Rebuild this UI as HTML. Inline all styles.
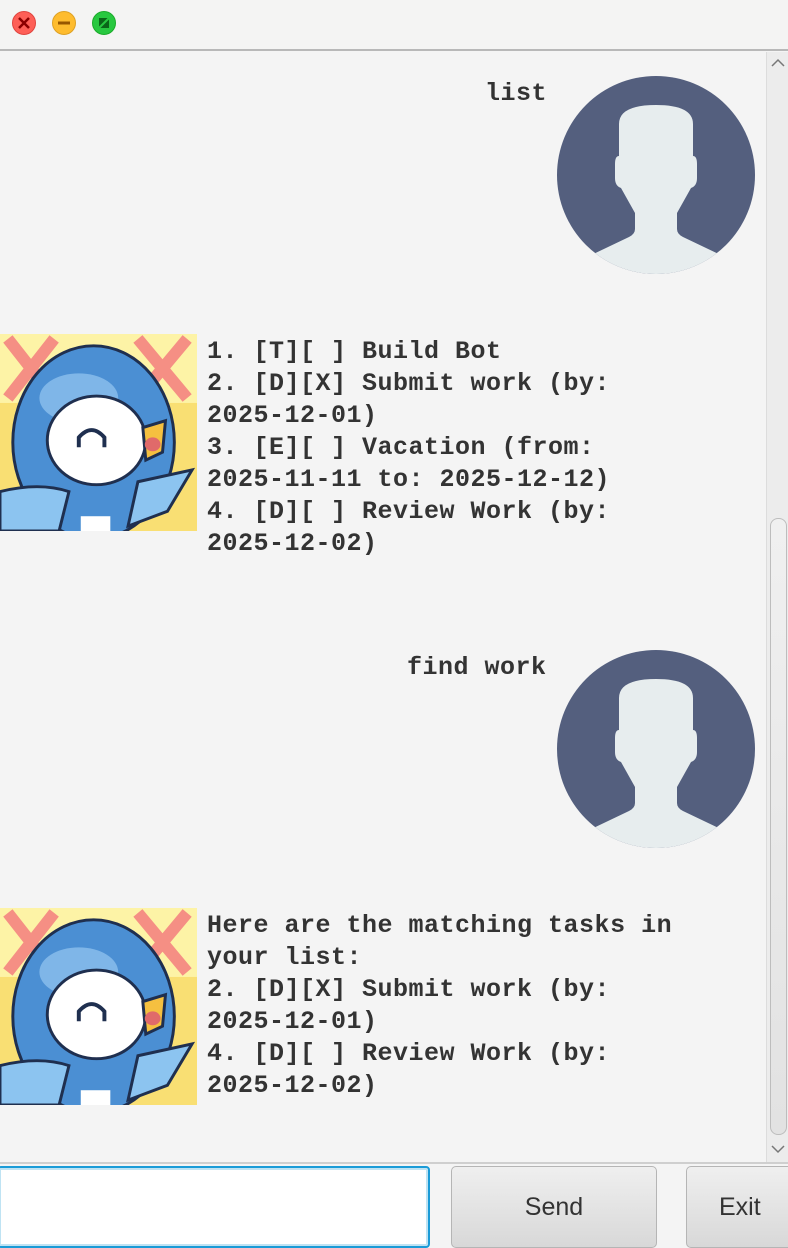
<!DOCTYPE html>
<html><head><meta charset="utf-8"><style>
*{margin:0;padding:0;box-sizing:border-box}
body{width:788px;height:1248px;background:#f4f4f4;position:relative;overflow:hidden;font-family:"Liberation Sans",sans-serif}
.titlebar{position:absolute;left:0;top:0;width:788px;height:51px;background:#f4f4f3;border-bottom:2px solid #b8b8b8}
.dot{position:absolute;top:11px;width:24px;height:24px;border-radius:50%}
.txt{position:absolute;font-family:"Liberation Mono",monospace;font-weight:bold;font-size:25px;letter-spacing:0.5px;line-height:32px;color:#333;white-space:pre}
.av{position:absolute;width:198px;height:198px}
.bird{position:absolute;width:197px;height:197px;left:0}
.sb{position:absolute;left:766px;top:52px;width:22px;height:1110px;background:#ececec;border-left:1px solid #dcdcdc}
.thumb{position:absolute;left:3px;top:466px;width:17px;height:617px;border:1px solid #bdbdbd;border-radius:8px;background:linear-gradient(#f0f0f0,#e2e2e2)}
.btn{position:absolute;top:1166px;height:82px;border:1px solid #b5b5b5;border-radius:5px;background:linear-gradient(#efefef,#d8d8d8);font-size:25px;color:#333;text-align:center;line-height:80px}
</style></head><body>
<div class="titlebar">
<div class="dot" style="left:12px;background:#fe5f57;border:1px solid #e0443e"><svg width="22" height="22"><path d="M6 6L16 16M16 6L6 16" stroke="#8b0000" stroke-width="2.5"/></svg></div>
<div class="dot" style="left:52px;background:#febc2e;border:1px solid #dea123"><svg width="22" height="22"><path d="M5 11H17" stroke="#985700" stroke-width="3"/></svg></div>
<div class="dot" style="left:92px;background:#28c840;border:1px solid #1aab29"><svg width="22" height="22"><path d="M6 6H16L6 16Z" fill="#0a6518"/><path d="M16 7V16H7Z" fill="#0a6518"/><path d="M6 16L16 6" stroke="#28c840" stroke-width="2"/></svg></div>
</div>

<div class="txt" style="left:485px;top:78px">list</div>
<svg class="av" style="left:557px;top:76px" viewBox="0 0 198 198"><defs><clipPath id="c1"><circle cx="99" cy="99" r="99"/></clipPath></defs><circle cx="99" cy="99" r="99" fill="#545f7e"/><g clip-path="url(#c1)" fill="#e7edee"><path d="M62 48Q62 29 99 29Q136 29 136 48V80Q140 80 140 88V102Q140 110 134 112L120 137V153Q120 158 126 161L170 182V200H28V182L72 161Q78 158 78 153V137L64 112Q58 110 58 102V88Q58 80 62 80Z"/></g></svg>

<svg class="bird" style="top:334px" viewBox="0 0 200 200"><rect width="200" height="200" fill="#f9df73"/><rect width="200" height="70" fill="#fdf3a6"/><path d="M8 5L55 65M55 5L8 65M140 5L190 65M190 5L140 65" stroke="#f58f84" stroke-width="12"/><ellipse cx="95" cy="110" rx="82" ry="98" fill="#4b8fd3" stroke="#1f2f4f" stroke-width="3"/><ellipse cx="80" cy="65" rx="40" ry="25" fill="#7fb6e8"/><path d="M0 160Q40 150 70 160L60 200H0Z" fill="#8cc4f0" stroke="#1f2f4f" stroke-width="3"/><path d="M140 150L195 138L170 180L130 195Z" fill="#8cc4f0" stroke="#1f2f4f" stroke-width="3"/><ellipse cx="98" cy="108" rx="50" ry="45" fill="#fff" stroke="#1f2f4f" stroke-width="3"/><path d="M80 115V105Q93 90 106 105V115" fill="none" stroke="#1f2f4f" stroke-width="4"/><path d="M145 95L168 88L165 120L148 128Z" fill="#f5c040" stroke="#1f2f4f" stroke-width="3"/><ellipse cx="155" cy="112" rx="8" ry="7" fill="#e06a6a"/><rect x="82" y="185" width="30" height="15" fill="#fff"/></svg>

<div class="txt" style="left:207px;top:336px">1. [T][ ] Build Bot
2. [D][X] Submit work (by:
2025-12-01)
3. [E][ ] Vacation (from:
2025-11-11 to: 2025-12-12)
4. [D][ ] Review Work (by:
2025-12-02)</div>

<div class="txt" style="left:407px;top:652px">find work</div>
<svg class="av" style="left:557px;top:650px" viewBox="0 0 198 198"><defs><clipPath id="c2"><circle cx="99" cy="99" r="99"/></clipPath></defs><circle cx="99" cy="99" r="99" fill="#545f7e"/><g clip-path="url(#c2)" fill="#e7edee"><path d="M62 48Q62 29 99 29Q136 29 136 48V80Q140 80 140 88V102Q140 110 134 112L120 137V153Q120 158 126 161L170 182V200H28V182L72 161Q78 158 78 153V137L64 112Q58 110 58 102V88Q58 80 62 80Z"/></g></svg>

<svg class="bird" style="top:908px" viewBox="0 0 200 200"><rect width="200" height="200" fill="#f9df73"/><rect width="200" height="70" fill="#fdf3a6"/><path d="M8 5L55 65M55 5L8 65M140 5L190 65M190 5L140 65" stroke="#f58f84" stroke-width="12"/><ellipse cx="95" cy="110" rx="82" ry="98" fill="#4b8fd3" stroke="#1f2f4f" stroke-width="3"/><ellipse cx="80" cy="65" rx="40" ry="25" fill="#7fb6e8"/><path d="M0 160Q40 150 70 160L60 200H0Z" fill="#8cc4f0" stroke="#1f2f4f" stroke-width="3"/><path d="M140 150L195 138L170 180L130 195Z" fill="#8cc4f0" stroke="#1f2f4f" stroke-width="3"/><ellipse cx="98" cy="108" rx="50" ry="45" fill="#fff" stroke="#1f2f4f" stroke-width="3"/><path d="M80 115V105Q93 90 106 105V115" fill="none" stroke="#1f2f4f" stroke-width="4"/><path d="M145 95L168 88L165 120L148 128Z" fill="#f5c040" stroke="#1f2f4f" stroke-width="3"/><ellipse cx="155" cy="112" rx="8" ry="7" fill="#e06a6a"/><rect x="82" y="185" width="30" height="15" fill="#fff"/></svg>

<div class="txt" style="left:207px;top:910px">Here are the matching tasks in
your list:
2. [D][X] Submit work (by:
2025-12-01)
4. [D][ ] Review Work (by:
2025-12-02)</div>

<div class="sb"><svg style="position:absolute;left:3px;top:6px" width="16" height="10"><path d="M2 8L8 2L14 8" fill="none" stroke="#777" stroke-width="1.5"/></svg><div class="thumb"></div><svg style="position:absolute;left:3px;top:1092px" width="16" height="10"><path d="M2 2L8 8L14 2" fill="none" stroke="#777" stroke-width="1.5"/></svg></div>
<div style="position:absolute;left:0;top:1162px;width:788px;height:2px;background:#cfcfcf"></div>

<div style="position:absolute;left:-3px;top:1166px;width:433px;height:82px;border:2px solid #1a9bd7;border-radius:4px;background:#fff;box-shadow:inset 0 0 0 2px #bfe3f3"></div>
<div class="btn" style="left:451px;width:206px">Send</div>
<div class="btn" style="left:686px;width:110px;text-align:left;padding-left:32px">Exit</div>
</body></html>
